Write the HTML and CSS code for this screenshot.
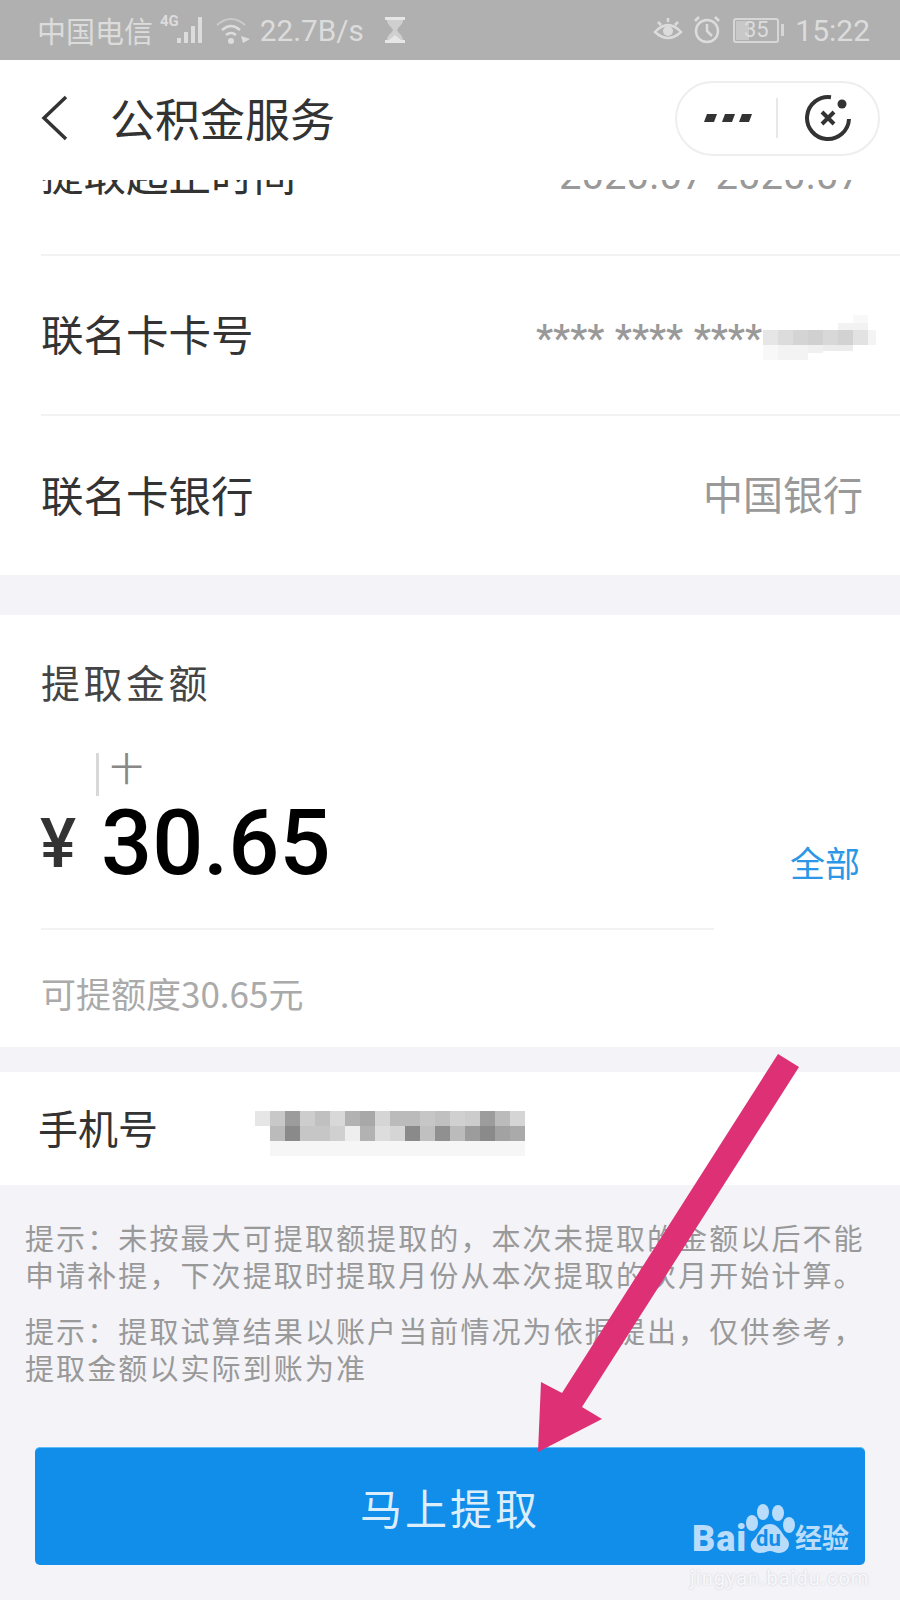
FILE: index.html
```html
<!DOCTYPE html>
<html lang="zh-CN">

<head>
  <meta charset="UTF-8" />
  <meta name="viewport" content="width=device-width, initial-scale=1.0" />
  <title>公积金服务</title>
  <link rel="stylesheet" href="styles.css">
</head>

<body>
  <div class="phone">
    <div class="status-bar">
      <div class="status-left">
        <span class="carrier">中国电信</span>
        <span class="net">4G</span>
        <svg class="signal" width="30" height="28" viewBox="0 0 30 28">
          <rect x="0" y="22" width="4" height="5" />
          <rect x="7" y="16" width="4" height="11" />
          <rect x="14" y="10" width="4" height="17" />
          <rect x="21" y="1" width="4" height="26" />
        </svg>
        <svg class="wifi" width="36" height="28" viewBox="0 0 36 28" fill="none" stroke="#dcdcdc">
          <path d="M2 9 Q16 -3 30 9" stroke-width="2" opacity="0.6" />
          <path d="M7 14 Q16 6 25 14" stroke-width="2.5" />
          <path d="M11 19 Q16 15 21 19" stroke-width="2.5" />
          <circle cx="16" cy="25" r="3" fill="#dcdcdc" stroke="none" />
          <path d="M26 20 L35 23 L28 27 Z" fill="#dcdcdc" stroke="none" />
        </svg>
        <span class="speed">22.7B/s</span>
        <svg class="hourglass" width="22" height="28" viewBox="0 0 22 28">
          <path d="M1 1 H21 V4 H19 C19 9 14 11 13 14 C14 17 19 19 19 24 H21 V27 H1 V24 H3 C3 19 8 17 9 14 C8 11 3 9 3 4 H1 Z" fill="#cfcfcf" />
          <path d="M1 1 H21 V4 H1 Z M1 24 H21 V27 H1 Z M11 19 L17 24 H5 Z" fill="#e6e6e6" />
        </svg>
      </div>
      <div class="status-right">
        <svg class="eye" width="30" height="28" viewBox="0 0 30 28" fill="none" stroke="#dcdcdc" stroke-width="2.5">
          <path d="M2 16 Q15 2 28 16 Q15 28 2 16 Z" />
          <circle cx="15" cy="15" r="5" fill="#dcdcdc" stroke="none" />
          <path d="M5 6 L8 9 M15 2 V6 M25 6 L22 9" />
        </svg>
        <svg class="alarm" width="28" height="30" viewBox="0 0 28 30" fill="none" stroke="#dcdcdc" stroke-width="2.5">
          <circle cx="14" cy="16" r="11" />
          <path d="M14 9 V16 L19 21" />
          <path d="M2 6 L6 2 M26 6 L22 2" />
        </svg>
        <div class="battery"><span class="battery-fill"></span><span class="battery-num">35</span></div>
        <span class="battery-tip"></span>
        <span class="clock">15:22</span>
      </div>
    </div>

    <header class="nav">
      <svg class="back" width="28" height="46" viewBox="0 0 28 46" fill="none" stroke="#333" stroke-width="3.5">
        <path d="M25 2 L3 23 L25 44" />
      </svg>
      <h1 class="nav-title">公积金服务</h1>
      <div class="capsule">
        <svg class="more" width="48" height="10" viewBox="0 0 48 10" fill="#333">
          <path d="M3 1 H13 L10 9 H0 Z" />
          <path d="M21 1 H31 L28 9 H18 Z" />
          <path d="M38 1 H48 L45 9 H35 Z" />
        </svg>
        <span class="capsule-line"></span>
        <svg class="close" width="48" height="48" viewBox="0 0 48 48" fill="none" stroke="#333" stroke-width="4">
          <path d="M27 3.2 A21 21 0 1 0 45 25" />
          <circle cx="38" cy="10" r="4.5" fill="#333" stroke="none" />
          <path d="M18 18 L30 30 M30 18 L18 30" />
        </svg>
      </div>
    </header>

    <section class="card info-list">
      <div class="row row-clipped">
        <span class="row-label">提取起止时间</span>
        <span class="row-value">2020.07-2020.07</span>
      </div>
      <div class="row">
        <span class="row-label">联名卡卡号</span>
        <span class="row-value card-no">
          **** **** ****
          <svg class="mosaic-card" width="113" height="46" viewBox="0 0 113 46">
            <rect x="0" y="15" width="15" height="15" fill="#e6e6e6" />
            <rect x="15" y="15" width="15" height="15" fill="#dcdcdc" />
            <rect x="30" y="15" width="15" height="15" fill="#d4d4d4" />
            <rect x="45" y="15" width="15" height="15" fill="#d0d0d0" />
            <rect x="60" y="15" width="15" height="15" fill="#d8d8d8" />
            <rect x="75" y="15" width="15" height="15" fill="#d2d2d2" />
            <rect x="90" y="15" width="15" height="15" fill="#e2e2e2" />
            <rect x="105" y="15" width="8" height="15" fill="#f4f4f4" />
            <rect x="0" y="30" width="15" height="15" fill="#f8f8f8" />
            <rect x="15" y="30" width="30" height="15" fill="#f3f3f3" />
            <rect x="45" y="30" width="15" height="8" fill="#f0f0f0" />
            <rect x="60" y="30" width="30" height="6" fill="#ececec" />
            <rect x="75" y="8" width="30" height="7" fill="#f2f2f2" />
            <rect x="90" y="0" width="15" height="8" fill="#f8f8f8" />
          </svg>
        </span>
      </div>
      <div class="row">
        <span class="row-label">联名卡银行</span>
        <span class="row-value">中国银行</span>
      </div>
    </section>

    <section class="card amount-card">
      <h2 class="amount-title">提取金额</h2>
      <div class="amount-hint"><span class="cursor"></span><span class="unit">十</span></div>
      <div class="amount-row">
        <span class="yen">¥</span>
        <span class="amount">30.65</span>
        <span class="all-link">全部</span>
      </div>
      <div class="amount-line"></div>
      <p class="limit">可提额度30.65元</p>
    </section>

    <section class="card phone-row">
      <span class="phone-label">手机号</span>
      <svg class="mosaic-phone" width="285" height="50" viewBox="0 0 285 50">
        <g>
          <rect x="0" y="0" width="15" height="15" fill="#e6e6e6" />
          <rect x="15" y="0" width="15" height="15" fill="#c8c8c8" />
          <rect x="30" y="0" width="15" height="15" fill="#9c9c9c" />
          <rect x="45" y="0" width="15" height="15" fill="#cdcdcd" />
          <rect x="60" y="0" width="15" height="15" fill="#c0c0c0" />
          <rect x="75" y="0" width="15" height="15" fill="#d8d8d8" />
          <rect x="90" y="0" width="15" height="15" fill="#b2b2b2" />
          <rect x="105" y="0" width="15" height="15" fill="#a8a8a8" />
          <rect x="120" y="0" width="15" height="15" fill="#d5d5d5" />
          <rect x="135" y="0" width="30" height="15" fill="#bbbbbb" />
          <rect x="165" y="0" width="15" height="15" fill="#c6c6c6" />
          <rect x="180" y="0" width="15" height="15" fill="#c0c0c0" />
          <rect x="195" y="0" width="15" height="15" fill="#d0d0d0" />
          <rect x="210" y="0" width="15" height="15" fill="#cccccc" />
          <rect x="225" y="0" width="15" height="15" fill="#9c9c9c" />
          <rect x="240" y="0" width="15" height="15" fill="#bbbbbb" />
          <rect x="255" y="0" width="15" height="15" fill="#d5d5d5" />
        </g>
        <g>
          <rect x="15" y="15" width="15" height="15" fill="#bbbbbb" />
          <rect x="30" y="15" width="15" height="15" fill="#8a8a8a" />
          <rect x="45" y="15" width="30" height="15" fill="#c6c6c6" />
          <rect x="75" y="15" width="15" height="15" fill="#d0d0d0" />
          <rect x="90" y="15" width="15" height="15" fill="#eeeeee" />
          <rect x="105" y="15" width="15" height="15" fill="#b2b2b2" />
          <rect x="120" y="15" width="15" height="15" fill="#dddddd" />
          <rect x="135" y="15" width="15" height="15" fill="#d5d5d5" />
          <rect x="150" y="15" width="15" height="15" fill="#8a8a8a" />
          <rect x="165" y="15" width="15" height="15" fill="#c0c0c0" />
          <rect x="180" y="15" width="15" height="15" fill="#909090" />
          <rect x="195" y="15" width="15" height="15" fill="#bbbbbb" />
          <rect x="210" y="15" width="15" height="15" fill="#9c9c9c" />
          <rect x="225" y="15" width="15" height="15" fill="#8a8a8a" />
          <rect x="240" y="15" width="15" height="15" fill="#a2a2a2" />
          <rect x="255" y="15" width="15" height="15" fill="#aaaaaa" />
        </g>
        <rect x="15" y="30" width="255" height="15" fill="#f6f6f6" />
      </svg>
    </section>

    <div class="tips">
      <p>提示&#xFF1A;未按最大可提取额提取的&#xFF0C;本次未提取的金额以后不能申请补提&#xFF0C;下次提取时提取月份从本次提取的次月开始计算&#x3002;</p>
      <p>提示&#xFF1A;提取试算结果以账户当前情况为依据提出&#xFF0C;仅供参考&#xFF0C;提取金额以实际到账为准</p>
    </div>

    <button type="button" class="submit-btn">马上提取</button>

    <!-- annotation drawn on top of the screenshot -->
    <svg class="arrow" width="900" height="1600" viewBox="0 0 900 1600">
      <polygon points="778,1054 799,1067 582,1407 602,1419 538,1452 541,1382 562,1393" fill="#de3175" />
    </svg>

    <div class="watermark">
      <div class="wm-logo">
        <span class="wm-bai">Bai</span>
        <svg class="wm-paw" width="50" height="52" viewBox="0 0 50 52" fill="#b9dcfa">
          <ellipse cx="7" cy="20" rx="6" ry="8" />
          <ellipse cx="18" cy="9" rx="6" ry="8" />
          <ellipse cx="33" cy="10" rx="6" ry="8" />
          <ellipse cx="44" cy="22" rx="6" ry="8" />
          <path d="M25 21 C34 21 36 30 42 36 C47 42 42 50 34 50 C30 50 28 48 25 48 C22 48 20 50 15 50 C7 50 3 42 8 37 C14 31 16 21 25 21 Z" />
        </svg>
        <span class="wm-du">du</span>
        <span class="wm-cn">经验</span>
      </div>
      <div class="wm-url">jingyan.baidu.com</div>
    </div>
  </div>
</body>

</html>
```

FILE: styles.css
```css
* {
  box-sizing: border-box;
}

body {
  margin: 0;
  font-family: "Noto Sans CJK SC", Roboto, sans-serif;
  background: #f3f3f8;
}

.phone {
  position: relative;
  width: 900px;
  height: 1600px;
  overflow: hidden;
  background: #f3f3f8;
}

/* Status bar */
.status-bar {
  height: 60px;
  padding: 0 30px 0 37px;
  background: #b0b0b0;
  color: #dcdcdc;
  display: flex;
  align-items: center;
  justify-content: space-between;
}

.status-left,
.status-right {
  display: flex;
  align-items: center;
}

.carrier {
  font-size: 29px;
  line-height: 60px;
}

.net {
  font-family: Roboto, sans-serif;
  font-size: 15px;
  font-weight: 700;
  margin: -18px 0 0 7px;
}

.signal {
  fill: #dcdcdc;
  margin-left: -2px;
}

.wifi {
  margin-left: 8px;
}

.speed {
  font-family: Roboto, sans-serif;
  font-size: 29.7px;
  margin-left: 9px;
}

.hourglass {
  margin-left: 20px;
}

.eye {
  margin-right: 10px;
}

.alarm {
  margin-right: 12px;
}

.battery {
  position: relative;
  width: 46px;
  height: 25px;
  border: 2px solid #d6d6d6;
  border-radius: 3px;
  display: flex;
  align-items: center;
  justify-content: center;
}

.battery-fill {
  position: absolute;
  left: 1px;
  top: 1px;
  bottom: 1px;
  width: 13px;
  background: #c8c8c8;
}

.battery-num {
  position: relative;
  font-family: Roboto, sans-serif;
  font-size: 22px;
  line-height: 1;
}

.battery-tip {
  width: 3px;
  height: 12px;
  margin: 0 11px 0 2px;
  background: #d6d6d6;
}

.clock {
  font-family: Roboto, sans-serif;
  font-size: 30px;
}

/* Header */
.nav {
  height: 120px;
  padding: 0 20px 4px 41px;
  position: relative;
  z-index: 2;
  background: #fff;
  display: flex;
  align-items: center;
}

.back {
  flex: none;
}

.nav-title {
  margin: 0 0 0 41px;
  font-size: 45px;
  font-weight: 400;
  line-height: 60px;
  color: #333;
}

.capsule {
  width: 205px;
  height: 75px;
  margin-left: auto;
  padding: 0 18px 0 27px;
  border: 2px solid #eee;
  border-radius: 38px;
  display: flex;
  align-items: center;
}

.capsule-line {
  width: 2px;
  height: 40px;
  margin: 0 26px 0 24px;
  background: #e8e8e8;
}

/* Cards */
.card {
  background: #fff;
}

.info-list {
  height: 395px;
  overflow: hidden;
  padding: 0 0 0 41px;
}

.row {
  height: 160px;
  padding: 0 39px 6px 0;
  border-bottom: 2px solid #f2f2f2;
  display: flex;
  align-items: center;
  justify-content: space-between;
}

.row:last-child {
  border-bottom: none;
}

.row-clipped {
  margin-top: -84px;
}

.row-clipped .row-value {
  margin: 6px 0 0 0;
}

.row-label {
  font-size: 42.5px;
  color: #333;
}

.row-value {
  margin-right: -2px;
  font-family: Roboto, "Noto Sans CJK SC", sans-serif;
  font-size: 40px;
  color: #999;
}

.card-no {
  display: flex;
  align-items: center;
  padding-top: 12px;
  font-size: 38.5px;
  font-weight: 500;
  margin-right: -15px;
  word-spacing: 1px;
}

.mosaic-card {
  margin: 0 0 0 1px;
}

.amount-card {
  height: 432px;
  margin-top: 40px;
  padding: 36px 0 0 41px;
}

.amount-title {
  margin: 0;
  font-size: 39px;
  font-weight: 400;
  line-height: 60px;
  letter-spacing: 3.5px;
  color: #444;
}

.amount-hint {
  height: 44px;
  margin: 41px 0 0 55px;
  display: flex;
  align-items: center;
}

.cursor {
  width: 3px;
  height: 43px;
  background: #d8d8d8;
}

.unit {
  margin: -14px 0 0 11px;
  font-size: 33px;
  line-height: 44px;
  color: #888;
}

.amount-row {
  height: 96px;
  padding-right: 40px;
  display: flex;
  align-items: center;
}

.yen {
  font-family: Roboto, sans-serif;
  font-size: 68px;
  font-weight: 500;
  color: #333;
  width: 61px;
  margin-left: -1px;
}

.amount {
  font-family: Roboto, sans-serif;
  font-size: 90px;
  font-weight: 500;
  line-height: 96px;
  color: #000;
}

.all-link {
  margin: 36px 0 0 auto;
  font-size: 35px;
  line-height: 44px;
  color: #2b97e6;
}

.amount-line {
  width: 673px;
  height: 2px;
  margin-top: 36px;
  background: #f2f2f2;
}

.limit {
  margin: 38px 0 0;
  font-size: 35px;
  line-height: 50px;
  color: #aaa;
}

.phone-row {
  height: 113px;
  margin-top: 25px;
  padding: 0 0 4px 38px;
  display: flex;
  align-items: center;
}

.phone-label {
  font-size: 40px;
  color: #333;
}

.mosaic-phone {
  margin: 18px 0 0 97px;
}

/* Tips */
.tips {
  padding: 34px 30px 0 25px;
  color: #999;
  font-size: 29px;
  line-height: 36.5px;
  letter-spacing: 2.1px;
}

.tips p {
  margin: 0 0 20px;
}

.submit-btn {
  display: block;
  width: 830px;
  height: 118px;
  margin: 62px 0 0 35px;
  background: #118ee9;
  border: none;
  border-top: 1px solid #5cbcf5;
  border-radius: 5px;
  color: #dcedfb;
  font-family: inherit;
  font-size: 42px;
  letter-spacing: 3px;
}

/* Annotation and watermark lie over the page */
.arrow {
  position: absolute;
  left: 0;
  top: 0;
}

.watermark {
  position: absolute;
  left: 690px;
  top: 1503px;
  width: 165px;
}

.wm-logo {
  position: relative;
  height: 60px;
  color: #b9dcfa;
}

.wm-bai {
  position: absolute;
  left: 2px;
  top: 18px;
  font-family: Roboto, sans-serif;
  font-size: 36px;
  font-weight: 900;
  line-height: 36px;
  letter-spacing: 1px;
}

.wm-paw {
  position: absolute;
  left: 55px;
  top: 0;
}

.wm-du {
  position: absolute;
  left: 66px;
  top: 24px;
  font-family: Roboto, sans-serif;
  font-size: 22px;
  font-weight: 700;
  line-height: 24px;
  color: #118ee9;
}

.wm-cn {
  position: absolute;
  left: 105px;
  top: 14px;
  font-size: 27px;
  font-weight: 700;
  line-height: 40px;
  white-space: nowrap;
}

.wm-url {
  margin-top: 3px;
  font-family: Roboto, sans-serif;
  font-size: 20px;
  letter-spacing: 1px;
  color: rgba(255, 255, 255, 0.85);
  text-shadow: 0 0 2px rgba(180, 180, 190, 0.7);
  white-space: nowrap;
}
```
